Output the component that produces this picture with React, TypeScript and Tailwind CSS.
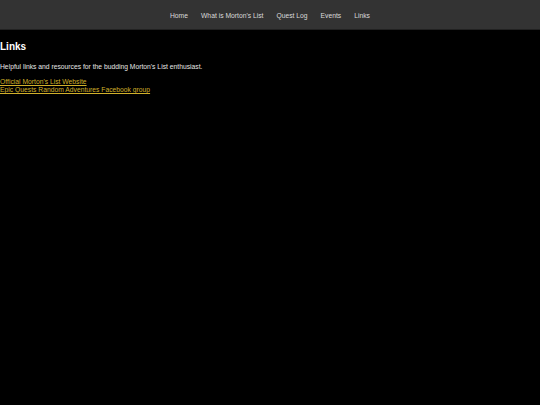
import React from 'react';

const navItems = ['Home', "What is Morton's List", 'Quest Log', 'Events', 'Links'];

export default function App() {
  return (
    <div className="min-h-screen bg-black font-['Liberation_Sans',Arial,sans-serif] text-[6.75px] leading-[8px] text-[#e6e6e6]">
      {/* Top navigation */}
      <nav className="flex h-[30px] items-center justify-center gap-[13px] border-b border-[#222] bg-[#333] pt-[2px]">
        {navItems.map((item) => (
          <a key={item} href="#" className="text-[#dadada]">
            {item}
          </a>
        ))}
      </nav>

      <main>
        <h2 className="mt-[11px] text-[10px] font-bold leading-[12px] text-white">Links</h2>
        <p className="mt-[10px]">Helpful links and resources for the budding Morton's List enthusiast.</p>
        <ul className="mt-[7px]">
          <li>
            <a href="#" className="text-[#d2b12a] underline">
              Official Morton's List Website
            </a>
          </li>
          <li>
            <a href="#" className="text-[#d2b12a] underline">
              Epic Quests Random Adventures Facebook group
            </a>
          </li>
        </ul>
      </main>
    </div>
  );
}
